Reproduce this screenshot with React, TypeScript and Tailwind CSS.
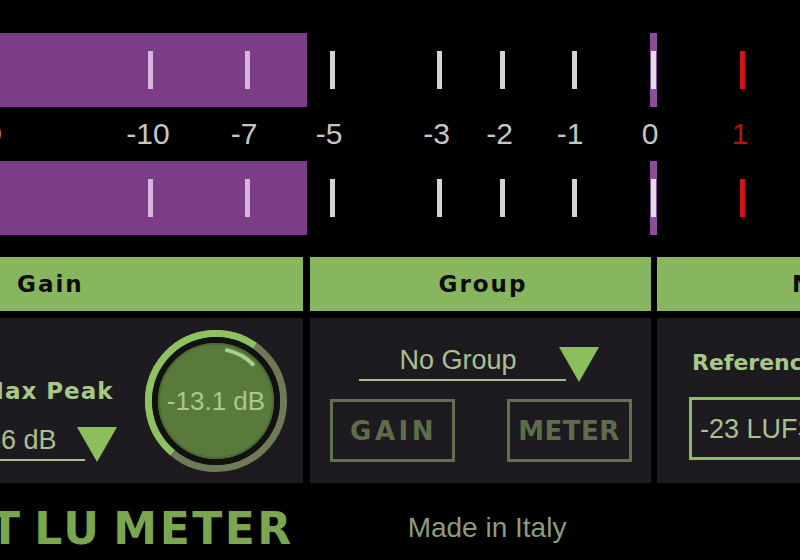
import React from "react";

type Tick = { x: number; label: string; lx: number; red?: boolean };

const FILL = 307;
const PEAK_LEFT = 650;

const ticks: Tick[] = [
  { x: -17, label: "-20", lx: -20 },
  { x: 150, label: "-10", lx: 148 },
  { x: 247, label: "-7", lx: 244 },
  { x: 332, label: "-5", lx: 329 },
  { x: 439, label: "-3", lx: 436.5 },
  { x: 502, label: "-2", lx: 499.5 },
  { x: 574, label: "-1", lx: 570 },
  { x: 653, label: "0", lx: 650 },
  { x: 742, label: "1", lx: 740, red: true },
];

function tickClass(t: Tick) {
  if (t.red) return "bg-[#d31515]";
  if (t.x < FILL) return "bg-[#dab5df]";
  if (t.x >= PEAK_LEFT && t.x <= PEAK_LEFT + 7) return "bg-[#e2dce4]";
  return "bg-[#d4d4d4]";
}

function MeterBar() {
  return (
    <div className="relative h-[74px]">
      <div className="absolute left-0 top-0 h-full bg-[#7b3e86]" style={{ width: FILL }} />
      <div className="absolute top-0 h-full w-[7px] bg-[#8d4e99]" style={{ left: PEAK_LEFT }} />
      {ticks.map((t) => (
        <div
          key={t.label}
          className={`absolute top-[18px] h-[38px] w-[5px] ${tickClass(t)}`}
          style={{ left: t.x - 2.5 }}
        />
      ))}
    </div>
  );
}

function Triangle({ className }: { className?: string }) {
  return (
    <svg width="40" height="35" viewBox="0 0 40 35" className={className}>
      <polygon points="0,0 40,0 20,35" fill="#8cbf5b" />
    </svg>
  );
}

function Knob() {
  return (
    <div className="relative h-[142px] w-[142px]">
      <svg width="142" height="142" viewBox="0 0 142 142">
        <circle cx="71" cy="71" r="67.5" fill="none" stroke="#6f7a59" strokeWidth="7" />
        <path
          d="M 27.61 122.71 A 67.5 67.5 0 0 1 109.72 15.71"
          fill="none"
          stroke="#8ec25e"
          strokeWidth="7"
        />
        <circle cx="71" cy="71" r="64" fill="#111111" />
        <circle cx="71" cy="71" r="58" fill="#5a7a3b" />
        <circle cx="71" cy="71" r="57" fill="none" stroke="#4d6a31" strokeWidth="2" />
        <path
          d="M 81.81 20.14 A 52 52 0 0 1 107.77 34.23"
          fill="none"
          stroke="#a8d088"
          strokeWidth="4"
          strokeLinecap="round"
        />
      </svg>
      <div className="absolute inset-0 flex items-center justify-center">
        <span className="font-['Liberation_Sans',sans-serif] text-[26px] leading-none text-[#a9c98d]">
          -13.1 dB
        </span>
      </div>
    </div>
  );
}

function Header({ children, pad }: { children: React.ReactNode; pad: string }) {
  return (
    <div className={`flex h-[54px] items-center bg-[#88b65e] ${pad}`}>
      <span className="whitespace-nowrap font-['DejaVu_Sans',sans-serif] text-[23px] font-bold leading-none tracking-[2px] text-[#0b0b0b]">
        {children}
      </span>
    </div>
  );
}

const labelText =
  "font-['DejaVu_Sans',sans-serif] text-[23px] font-bold leading-[27px] tracking-[1px] text-[#a8c888]";
const valueText = "font-['Liberation_Sans',sans-serif] text-[27px] leading-[30px] text-[#a9c190]";

export default function App() {
  return (
    <div className="relative h-[560px] w-[800px] overflow-hidden bg-black">
      {/* Meter */}
      <div className="pt-[33px]">
        <MeterBar />
        <div className="relative h-[54px]">
          {ticks.map((t) => (
            <div
              key={t.label}
              className="absolute top-0 flex h-full -translate-x-1/2 items-center"
              style={{ left: t.lx }}
            >
              <span
                className={`font-['Liberation_Sans',sans-serif] text-[30px] leading-none ${
                  t.red ? "text-[#b81414]" : "text-[#c6c6c6]"
                }`}
              >
                {t.label}
              </span>
            </div>
          ))}
        </div>
        <MeterBar />
      </div>

      {/* Panels */}
      <div className="mt-[22px] -ml-[38px] flex h-[226px]">
        {/* Gain */}
        <div className="flex w-[341px] shrink-0 flex-col gap-[7px]">
          <Header pad="pl-[55px]">Gain</Header>
          <div className="flex h-[165px] items-start bg-[#1d1b1f] pl-[18px]">
            <div className="flex flex-col pt-[60px]">
              <span className={`${labelText} ml-[1px]`}>Max Peak</span>
              <div className="relative mt-[20px] flex h-[38px] w-[137px] items-start">
                <span className={`${valueText} ml-[12px]`}>-6 dB</span>
                <Triangle className="absolute right-0 top-[2px]" />
                <div className="absolute left-0 top-[34px] h-[2px] w-[105px] bg-[#a9bf90]" />
              </div>
            </div>
            <div className="ml-[28px] mt-[12px]">
              <Knob />
            </div>
          </div>
        </div>

        {/* Group */}
        <div className="ml-[7px] flex w-[341px] shrink-0 flex-col gap-[7px]">
          <Header pad="justify-center pl-[5px]">Group</Header>
          <div className="flex h-[165px] flex-col items-center bg-[#1d1b1f] pt-[27px]">
            <div className="relative ml-[-4px] h-[37px] w-[240px]">
              <div className="flex w-[207px] justify-center pr-[8px]">
                <span className={valueText}>No Group</span>
              </div>
              <Triangle className="absolute right-0 top-[2px]" />
              <div className="absolute left-0 top-[34px] h-[2px] w-[207px] bg-[#a9bf90]" />
            </div>
            <div className="mt-[17px] flex gap-[52px]">
              <div className="flex h-[63px] w-[125px] items-center justify-center border-[3px] border-[#646e52] pl-[3px]">
                <span className="font-['DejaVu_Sans',sans-serif] text-[26px] font-bold leading-none tracking-[3.5px] text-[#5d6c49]">
                  GAIN
                </span>
              </div>
              <div className="flex h-[63px] w-[125px] items-center justify-center border-[3px] border-[#646e52]">
                <span className="font-['DejaVu_Sans',sans-serif] text-[26px] font-bold leading-none tracking-[0.5px] text-[#5d6c49]">
                  METER
                </span>
              </div>
            </div>
          </div>
        </div>

        {/* Reference */}
        <div className="ml-[6px] flex w-[341px] shrink-0 flex-col gap-[7px]">
          <Header pad="pl-[135px]">Meter</Header>
          <div className="flex h-[165px] flex-col bg-[#1d1b1f] pl-[32px] pt-[31px]">
            <span className="ml-[3px] whitespace-nowrap font-['DejaVu_Sans',sans-serif] text-[22px] font-bold leading-[27px] text-[#a8c888]">
              Reference Level
            </span>
            <div className="mt-[21px] flex h-[63px] w-[200px] items-center border-[3px] border-[#8cbf5b] pl-[8px]">
              <span className={`${valueText} whitespace-nowrap text-[#a8c98d]`}>-23 LUFS</span>
            </div>
          </div>
        </div>
      </div>

      {/* Footer */}
      <div className="flex items-start pt-[24px]">
        <span className="-ml-[10px] whitespace-pre font-['DejaVu_Sans',sans-serif] text-[44px] font-bold leading-none tracking-[2.5px] text-[#7ba650] [word-spacing:-6px] [text-shadow:1px_2px_2px_#000]">
          T LU METER
        </span>
        <span className="ml-[114px] mt-[7px] font-['Liberation_Sans',sans-serif] text-[28px] leading-none text-[#8d9c7b]">
          Made in Italy
        </span>
      </div>
    </div>
  );
}
